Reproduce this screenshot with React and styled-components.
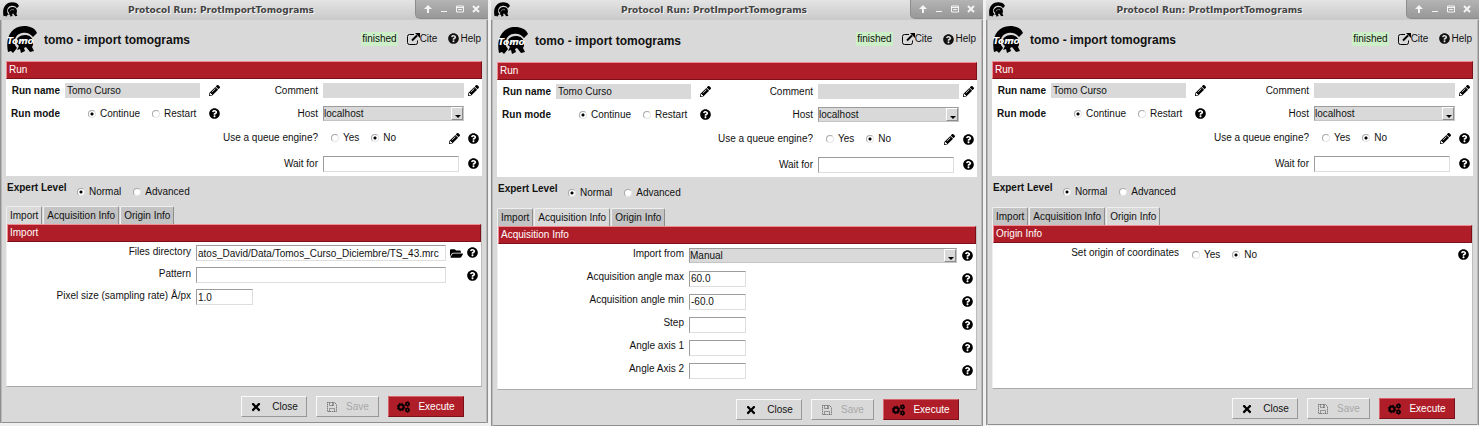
import React, { useId, useState } from "react";
import styled, { createGlobalStyle, css } from "styled-components";
import { FaPencilAlt, FaQuestionCircle, FaFolderOpen, FaTimes } from "react-icons/fa";

const grey = "#d9d9d9";
const red = "#af1e28";

const GlobalStyle = createGlobalStyle`
  * { box-sizing: border-box; }
  body {
    margin: 0;
    background: #f0f0f0;
    color: #111;
    font: 10px/12px "Liberation Sans", Arial, sans-serif;
  }
  button, input, select { font: inherit; color: inherit; margin: 0; }
`;

const Desktop = styled.main`
  display: grid;
  grid-template-columns: 488fr 492fr 493fr;
  gap: 3px;
  min-height: 100vh;
`;

const Window = styled.section`
  display: flex;
  flex-direction: column;
  min-width: 0;
  margin-bottom: ${(p) => p.$lift}px;
  background: ${grey};
  box-shadow: inset 1px 0 #8f8f8f, inset 2px 0 #b9b9b9, inset -1px 0 #8f8f8f, inset -2px 0 #b9b9b9,
    inset 0 -1px #8f8f8f;
`;

const TitleBar = styled.header`
  display: flex;
  align-items: flex-start;
  height: 20px;
  padding-left: 3px;
  background: linear-gradient(#e4e4e4, #c9c9c9);
`;

const WindowTitle = styled.h1`
  flex: 1;
  margin: 0;
  padding-left: 8px;
  text-align: center;
  white-space: nowrap;
  color: #444;
  text-shadow: 1px 1px #f4f4f4;
  font: bold 9px/20px "DejaVu Sans", sans-serif;
`;

const WindowControls = styled.div`
  display: grid;
  grid-template-columns: repeat(4, 1fr);
  width: 73px;
  height: 19px;
  padding: 0 4px;
  border: 1px solid #8c8c8c;
  border-width: 0 0 1px 1px;
  border-radius: 0 0 0 5px;
  background: linear-gradient(#b4b4b4, #989898);
`;

const ControlButton = styled.button`
  display: grid;
  place-items: center;
  padding: 0;
  border: 0;
  background: none;
  color: #f4f4f4;
`;

const Heading = styled.div`
  display: flex;
  align-items: center;
  height: ${(p) => p.$height}px;
  padding: 0 7px 2px;
`;

const ProtocolName = styled.h2`
  flex: 1;
  margin: 0 0 0 7px;
  padding-top: 1px;
  font-size: 12px;
  line-height: 16px;
`;

const Status = styled.span`
  padding: 1px;
  background: #cdefc8;
  margin-bottom: 2px;
`;

const HeadLink = styled.a`
  display: flex;
  align-items: center;
  gap: ${(p) => p.$gap}px;
  margin: 0 0 2px ${(p) => p.$before}px;
  color: inherit;
  text-decoration: none;
`;

const Bar = styled.h3`
  height: 18px;
  margin: 0;
  padding: 0 2px;
  border: 1px solid;
  border-color: #ef8d93 #7c1018 #7c1018 #ef8d93;
  background: ${red};
  color: #fff;
  font-size: 10px;
  font-weight: normal;
  line-height: 16px;
`;

const RunSection = styled.section`
  margin: 0 6px;
`;

const RunForm = styled.form`
  display: grid;
  grid-template-columns: 59px 135px 28px minmax(0, 1fr) 141px 18px;
  grid-template-rows: 23px 23px 26px 25px;
  align-items: center;
  background: #fff;
`;

const FieldLabel = styled.label`
  grid-column: ${(p) => p.$column};
  padding-right: 5px;
  text-align: right;
  white-space: nowrap;
  font-weight: ${(p) => (p.$bold ? "bold" : "normal")};
`;

const RunSlot = styled.div`
  grid-column: ${(p) => p.$column};
  display: flex;
  align-items: center;
  justify-content: ${(p) => p.$justify || "flex-start"};
  padding-right: ${(p) => p.$inset || 0}px;
`;

const TextInput = styled.input`
  width: ${(p) => p.$width || "100%"};
  height: 16px;
  padding: 0 1px;
  border: 1px solid;
  border-color: #9c9c9c #dedede #dedede #9c9c9c;
  border-radius: 0;
  background: #fff;
  outline: 0;
  ${(p) =>
    p.$flat &&
    css`
      height: 15px;
      border-color: ${grey};
      background: ${grey};
    `}
`;

const SelectBox = styled.div`
  position: relative;
  width: 100%;
  height: 15px;
  border: 1px solid;
  border-color: #9c9c9c #c4c4c4 #c4c4c4 #9c9c9c;
  background: ${grey};

  &::before {
    content: "";
    position: absolute;
    inset: 0 0 0 auto;
    width: 10px;
    border: 1px solid;
    border-color: #fff #8c8c8c #8c8c8c #fff;
    pointer-events: none;
  }
  &::after {
    content: "";
    position: absolute;
    right: 2px;
    bottom: 2px;
    border: 3px solid transparent;
    border-top-color: #000;
    border-bottom: 0;
    pointer-events: none;
  }
`;

const Select = styled.select`
  display: block;
  width: 100%;
  height: 13px;
  padding: 0;
  border: 0;
  background: none;
  appearance: none;
  outline: 0;
`;

const RadioGroup = styled.div`
  display: flex;
  gap: ${(p) => p.$gap}px;
  padding-left: ${(p) => p.$indent}px;
`;

const RadioLabel = styled.label`
  display: flex;
  align-items: center;
  gap: 4px;
`;

const RadioInput = styled.input`
  appearance: none;
  width: 8px;
  height: 8px;
  border: 1px solid;
  border-color: #aaa #e6e6e6 #e6e6e6 #aaa;
  border-radius: 50%;
  background: #fff;

  &:checked {
    background: radial-gradient(circle, #000 0 1px, #fff 2px);
  }
`;

const IconButton = styled.button`
  display: flex;
  padding: 0;
  border: 0;
  background: none;
  color: #000;
`;

const ExpertRow = styled.div`
  display: flex;
  height: ${(p) => p.$height}px;
  padding: 6px 7px 0;
`;

const ExpertLabel = styled.strong`
  width: 58px;
  white-space: nowrap;
`;

const ExpertChoices = styled.div`
  padding-top: 4px;
`;

const Tabs = styled.div`
  display: flex;
  gap: 1px;
  margin: 0 6px;
`;

const Tab = styled.button`
  height: 18px;
  padding: 0 3px;
  border: 1px solid;
  border-color: #efefef #8e8e8e transparent #efefef;
  border-bottom: 0;
  border-radius: 2px 2px 0 0;
  background: ${(p) => (p.$active ? grey : "#c3c3c3")};
`;

const TabPanel = styled.section`
  flex: 1;
  margin: 0 6px;
  border: 1px solid;
  border-color: transparent #bdbdbd #a9a9a9 #efefef;
  border-top: 0;
  background: #fff;
`;

const ParamRow = styled.div`
  display: grid;
  grid-template-columns: ${(p) => p.$labelWidth}px 1fr auto;
  align-items: center;
  height: ${(p) => p.$height}px;
  padding-right: 3px;
`;

const ParamLabel = styled.label`
  padding: 0 5px 3px 0;
  text-align: right;
`;

const ParamIcons = styled.div`
  display: flex;
  justify-content: flex-end;
  gap: 4px;
  min-width: ${(p) => p.$width}px;
`;

const Footer = styled.footer`
  display: flex;
  justify-content: flex-end;
  align-items: flex-start;
  gap: 9px;
  height: 36px;
  padding: 9px 24px 0 0;
`;

const FooterButton = styled.button`
  display: flex;
  align-items: center;
  justify-content: center;
  gap: ${(p) => p.$gap}px;
  width: ${(p) => p.$width}px;
  height: 21px;
  padding: 0;
  border: 1px solid;
  border-color: #fafafa #989898 #989898 #fafafa;
  background: ${grey};

  &:disabled {
    color: #a8a8a8;
  }
  ${(p) =>
    p.$primary &&
    css`
      border-color: #d8646b #7c1018 #7c1018 #d8646b;
      background: ${red};
      color: #fff;
      svg { color: #000; }
    `}
`;

const HelmetShape = () => (
  <>
    <path d="M1 26C-2 12 4 0 17 0c6 0 11 2 13 7l-4 4C23 7 19 6 15 7 9 8 7 13 8 19l2 3-4 5-2-2z" />
    <path d="M9 17c0-5 4-8 9-8 4 0 7 2 8 6v4l-1 2 2 4-4 1-4-5-2 1 1 3-4 2-1-4-3 1 2-4z" />
    <path d="M13 17c1-3 4-4 8-3" fill="none" stroke="#d9d9d9" />
  </>
);

const Helmet = () => (
  <svg width="16" height="15" viewBox="0 0 30 27" style={{ marginTop: 2 }} aria-hidden="true">
    <HelmetShape />
  </svg>
);

const TomoLogo = () => (
  <svg width="30" height="27" viewBox="0 0 30 27" role="img" aria-label="Tomo">
    <HelmetShape />
    <text x="0" y="18" fill="#fff" fontFamily="DejaVu Sans, sans-serif" fontSize="9" fontWeight="bold" fontStyle="italic">
      Tomo
    </text>
  </svg>
);

const CiteIcon = () => (
  <svg width="13" height="12" viewBox="0 0 13 12" fill="none" stroke="#000" aria-hidden="true">
    <path d="M7 1.500H2.500Q.500 1.500 .500 3.500v6q0 2 2 2h6q2 0 2-2V7.500" />
    <path d="M5 7.500l5-5" strokeWidth="2" />
    <path d="M8 0h5v5z" fill="#000" stroke="none" />
  </svg>
);

const SaveIcon = () => (
  <svg width="12" height="12" viewBox="0 0 12 12" fill="none" stroke="#555" strokeDasharray="1 1" aria-hidden="true">
    <path d="M1.500 1.500h7l2 2v7h-9zM3.500 1.500v3h4v-3M3.500 10.500v-3h5v3M6.500 1.500v3" />
  </svg>
);

const CogsIcon = () => (
  <svg width="13" height="12" viewBox="0 0 13 12" fill="none" stroke="#000" aria-hidden="true">
    <circle cx="4" cy="6" r="2.500" strokeWidth="2" />
    <circle cx="4" cy="6" r="3.800" strokeDasharray="1.500 1.480" />
    <circle cx="10.500" cy="3" r="1.500" strokeWidth="1.500" />
    <circle cx="10.500" cy="3" r="2.300" strokeDasharray="1.200 1.200" />
    <circle cx="10.500" cy="9" r="1.500" strokeWidth="1.500" />
    <circle cx="10.500" cy="9" r="2.300" strokeDasharray="1.200 1.200" />
  </svg>
);

const controlShapes = [
  ["Keep above", "M4 0l4 4H5v4H3V4H0z", true],
  ["Minimize", "M1 6.500h6", false],
  ["Maximize", "M.500 1h7v6h-7zM.500 2.500h7M2 4.500h4", false],
  ["Close window", "M1 1l6 6M7 1l-6 6", false],
];

const Help = () => (
  <IconButton type="button" aria-label="Help">
    <FaQuestionCircle size={11} />
  </IconButton>
);

const Edit = () => (
  <IconButton type="button" aria-label="Edit">
    <FaPencilAlt size={11} />
  </IconButton>
);

function Radios({ label, options, initial, gap, indent }) {
  const name = useId();
  return (
    <RadioGroup role="radiogroup" aria-label={label} $gap={gap} $indent={indent}>
      {options.map((option) => (
        <RadioLabel key={option}>
          <RadioInput type="radio" name={name} defaultChecked={option === initial} />
          {option}
        </RadioLabel>
      ))}
    </RadioGroup>
  );
}

function Dropdown({ id, value }) {
  return (
    <SelectBox>
      <Select id={id} defaultValue={value}>
        <option>{value}</option>
      </Select>
    </SelectBox>
  );
}

function RunFields() {
  const id = useId();
  return (
    <RunForm>
      <FieldLabel $column={1} $bold htmlFor={id + "name"}>Run name</FieldLabel>
      <RunSlot $column={2}><TextInput id={id + "name"} $flat defaultValue="Tomo Curso" /></RunSlot>
      <RunSlot $column={3} $justify="center"><Edit /></RunSlot>
      <FieldLabel $column={4} htmlFor={id + "comment"}>Comment</FieldLabel>
      <RunSlot $column={5}><TextInput id={id + "comment"} $flat /></RunSlot>
      <RunSlot $column={6} $justify="center"><Edit /></RunSlot>

      <FieldLabel as="span" $column={1} $bold>Run mode</FieldLabel>
      <RunSlot $column={2}>
        <Radios label="Run mode" options={["Continue", "Restart"]} initial="Continue" gap={12} indent={23} />
      </RunSlot>
      <RunSlot $column={3} $justify="center"><Help /></RunSlot>
      <FieldLabel $column={4} htmlFor={id + "host"}>Host</FieldLabel>
      <RunSlot $column={5}><Dropdown id={id + "host"} value="localhost" /></RunSlot>

      <FieldLabel as="span" $column="3 / 5">Use a queue engine?</FieldLabel>
      <RunSlot $column={5} $justify="space-between" $inset={4}>
        <Radios label="Use a queue engine?" options={["Yes", "No"]} initial="No" gap={12} indent={8} />
        <Edit />
      </RunSlot>
      <RunSlot $column={6} $justify="center"><Help /></RunSlot>

      <FieldLabel $column={4} htmlFor={id + "wait"}>Wait for</FieldLabel>
      <RunSlot $column={5}><TextInput id={id + "wait"} $width="136px" /></RunSlot>
      <RunSlot $column={6} $justify="center"><Help /></RunSlot>
    </RunForm>
  );
}

function Param({ param, height, labelWidth, iconWidth }) {
  const id = useId();
  const { label, kind, value, wide, icons = ["help"] } = param;
  return (
    <ParamRow $height={height} $labelWidth={labelWidth}>
      <ParamLabel as={kind === "radio" ? "span" : "label"} htmlFor={kind === "radio" ? undefined : id}>
        {label}
      </ParamLabel>
      {kind === "radio" && <Radios label={label} options={["Yes", "No"]} initial={value} gap={12} indent={8} />}
      {kind === "select" && <Dropdown id={id} value={value} />}
      {!kind && <TextInput id={id} $width={wide ? "100%" : "57px"} defaultValue={value} />}
      <ParamIcons $width={iconWidth}>
        {icons.includes("folder") && (
          <IconButton type="button" aria-label="Browse"><FaFolderOpen size={13} /></IconButton>
        )}
        {icons.includes("help") && <Help />}
      </ParamIcons>
    </ParamRow>
  );
}

const sections = {
  Import: [
    { label: "Files directory", value: "atos_David/Data/Tomos_Curso_Diciembre/TS_43.mrc", wide: true, icons: ["folder", "help"] },
    { label: "Pattern", wide: true },
    { label: "Pixel size (sampling rate) Å/px", value: "1.0", icons: [] },
  ],
  "Acquisition Info": [
    { label: "Import from", kind: "select", value: "Manual" },
    { label: "Acquisition angle max", value: "60.0" },
    { label: "Acquisition angle min", value: "-60.0" },
    { label: "Step" },
    { label: "Angle axis 1" },
    { label: "Angle Axis 2" },
  ],
  "Origin Info": [{ label: "Set origin of coordinates", kind: "radio", value: "No" }],
};

function ProtocolWindow({ tab, lift, heading, expert, rowHeight, labelWidth, iconWidth }) {
  const [active, setActive] = useState(tab);
  return (
    <Window $lift={lift}>
      <TitleBar>
        <Helmet />
        <WindowTitle>Protocol Run: ProtImportTomograms</WindowTitle>
        <WindowControls>
          {controlShapes.map(([name, d, solid]) => (
            <ControlButton key={name} type="button" aria-label={name}>
              <svg width="8" height="8" viewBox="0 0 8 8" fill={solid ? "currentColor" : "none"} stroke={solid ? "none" : "currentColor"} strokeWidth={name === "Close window" ? 2 : 1}>
                <path d={d} />
              </svg>
            </ControlButton>
          ))}
        </WindowControls>
      </TitleBar>
      <Heading $height={heading}>
        <TomoLogo />
        <ProtocolName>tomo - import tomograms</ProtocolName>
        <Status>finished</Status>
        <HeadLink href="#cite" $before={9} $gap={0}><CiteIcon />Cite</HeadLink>
        <HeadLink href="#help" $before={11} $gap={1}><FaQuestionCircle size={11} />Help</HeadLink>
      </Heading>
      <RunSection>
        <Bar>Run</Bar>
        <RunFields />
      </RunSection>
      <ExpertRow $height={expert}>
        <ExpertLabel>Expert Level</ExpertLabel>
        <ExpertChoices>
          <Radios label="Expert Level" options={["Normal", "Advanced"]} initial="Normal" gap={12} indent={12} />
        </ExpertChoices>
      </ExpertRow>
      <Tabs role="tablist">
        {Object.keys(sections).map((name) => (
          <Tab key={name} type="button" role="tab" aria-selected={name === active} $active={name === active} onClick={() => setActive(name)}>
            {name}
          </Tab>
        ))}
      </Tabs>
      <TabPanel role="tabpanel" aria-label={active}>
        <Bar>{active}</Bar>
        <form key={active}>
          {sections[active].map((param) => (
            <Param key={param.label} param={param} height={rowHeight} labelWidth={labelWidth} iconWidth={iconWidth} />
          ))}
        </form>
      </TabPanel>
      <Footer>
        <FooterButton type="button" $width={66} $gap={10}><FaTimes size={12} color="#000" />Close</FooterButton>
        <FooterButton type="button" $width={63} $gap={8} disabled><SaveIcon />Save</FooterButton>
        <FooterButton type="button" $width={76} $gap={8} $primary><CogsIcon />Execute</FooterButton>
      </Footer>
    </Window>
  );
}

export default function App() {
  return (
    <>
      <GlobalStyle />
      <Desktop>
        <ProtocolWindow tab="Import" lift={3} heading={41} expert={30} rowHeight={22} labelWidth={189} iconWidth={32} />
        <ProtocolWindow tab="Acquisition Info" lift={0} heading={42} expert={31} rowHeight={23} labelWidth={191} iconWidth={16} />
        <ProtocolWindow tab="Origin Info" lift={1} heading={41} expert={31} rowHeight={23} labelWidth={191} iconWidth={16} />
      </Desktop>
    </>
  );
}
